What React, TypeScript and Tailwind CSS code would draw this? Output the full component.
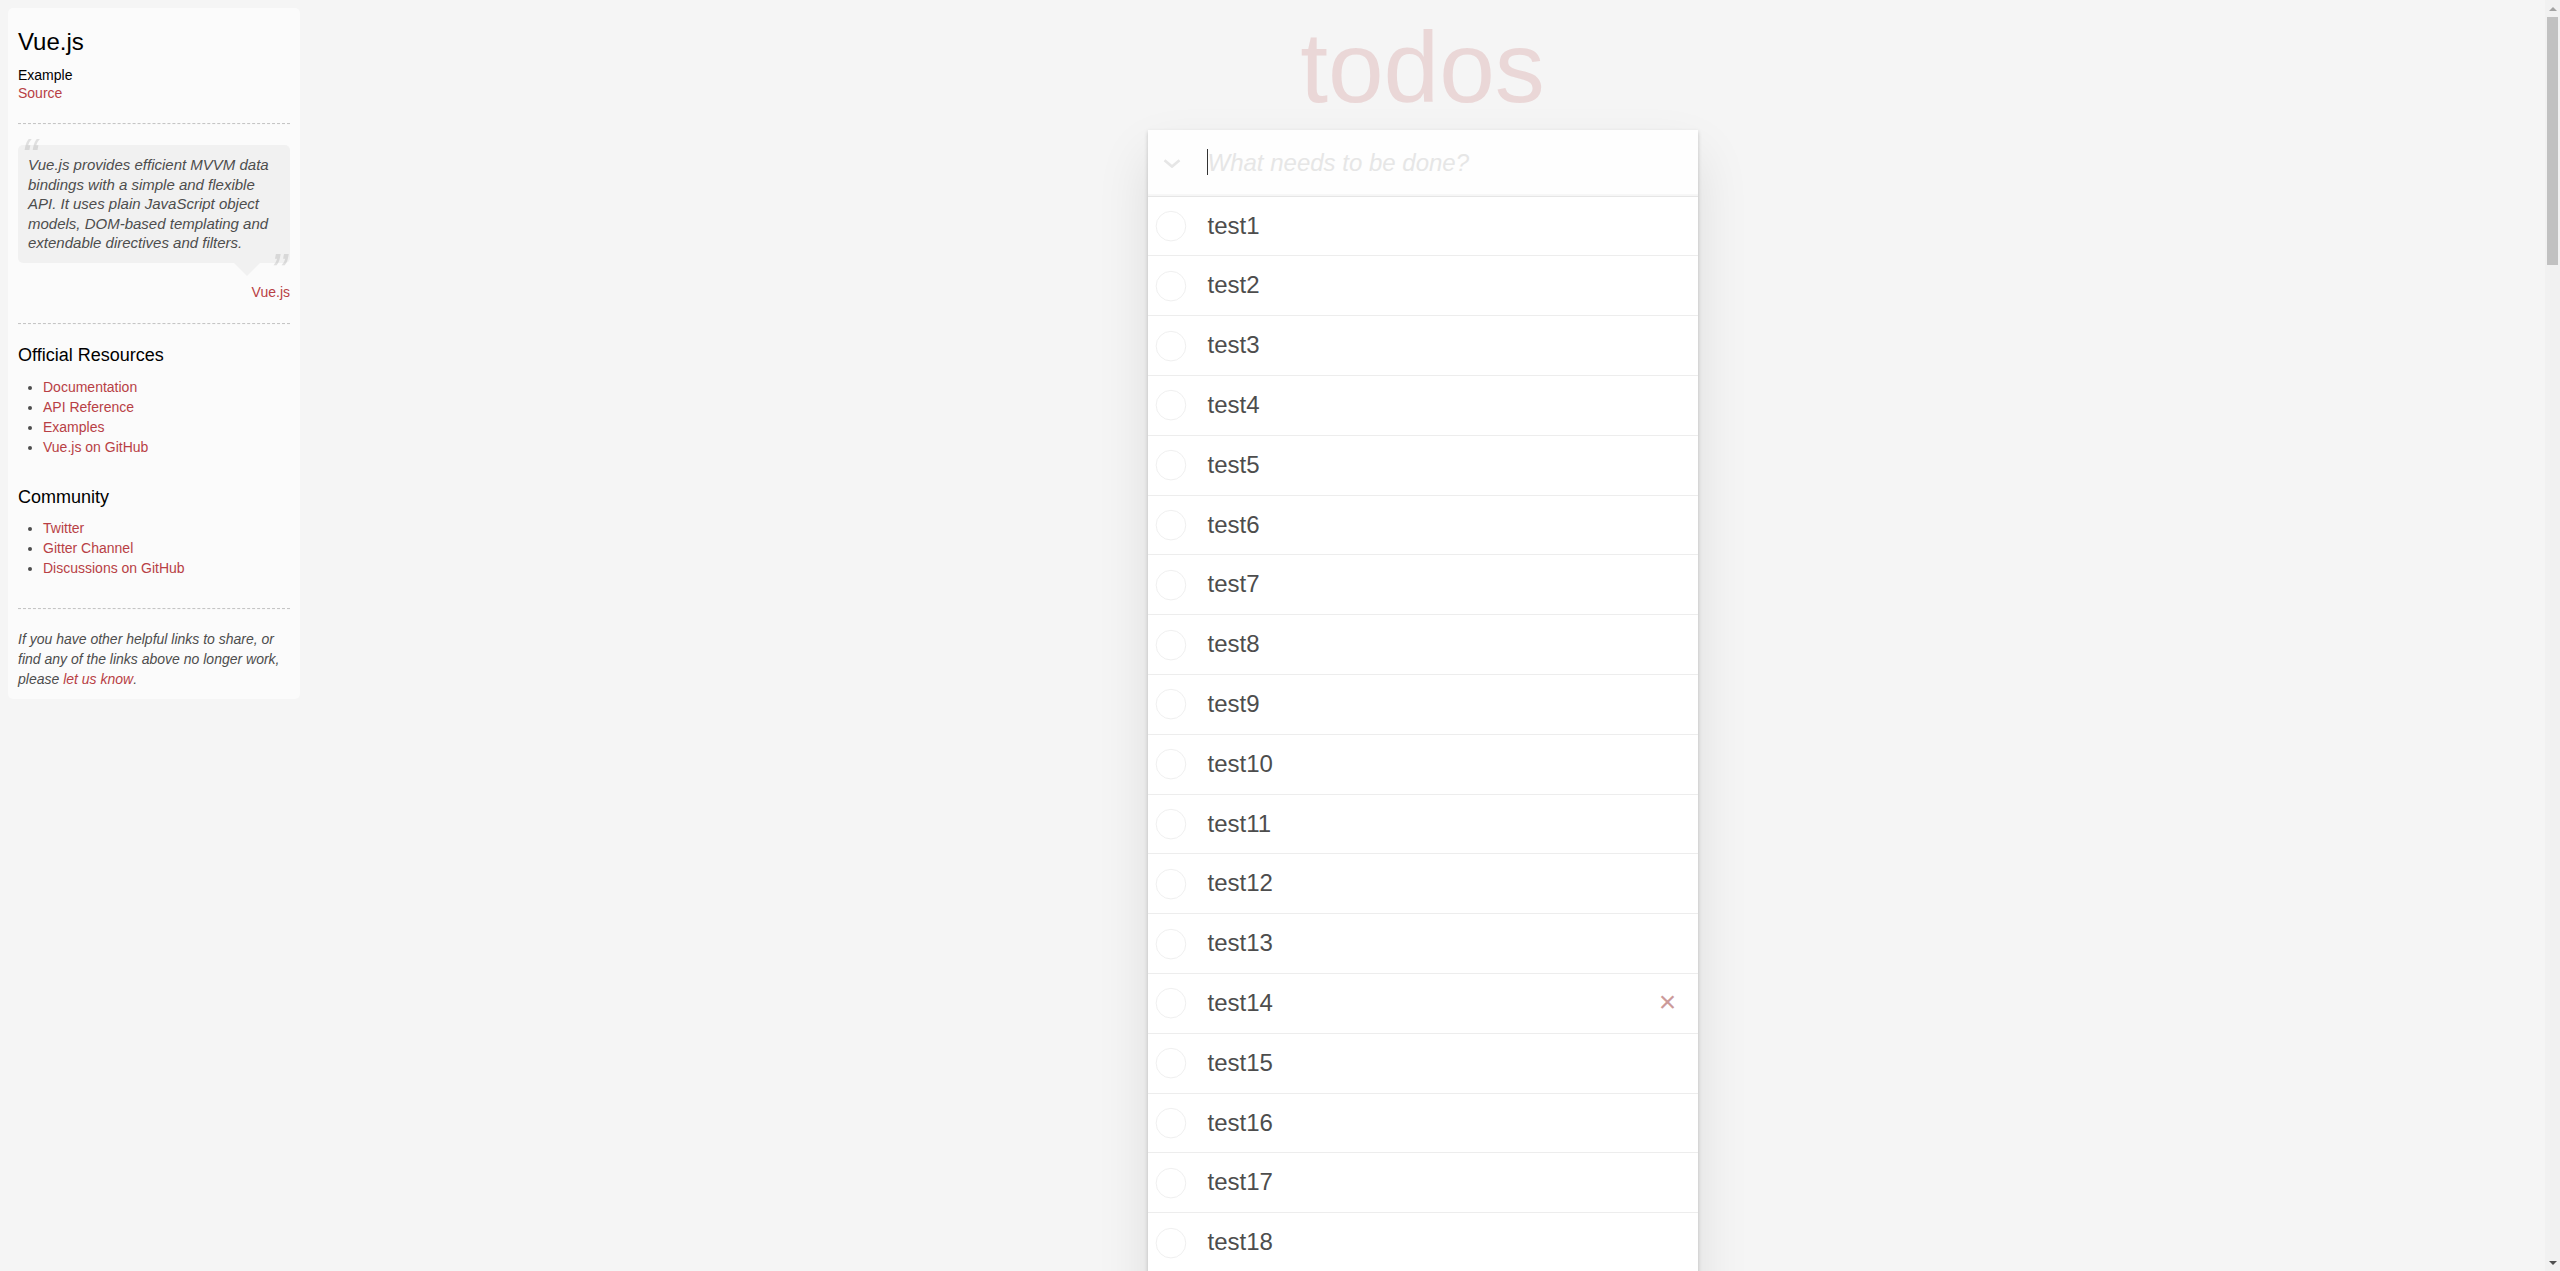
import React from "react";

const todos = Array.from({ length: 100 }, (_, i) => `test${i + 1}`);

function Circle() {
  return (
    <svg className="h-[40px] w-[40px] shrink-0" viewBox="-10 -18 100 135" aria-hidden>
      <circle cx="50" cy="50" r="50" fill="none" stroke="#ededed" strokeWidth="3" />
    </svg>
  );
}

function Hr() {
  return <hr className="my-5 h-0 border-x-0 border-y border-dashed border-t-[#c5c5c5] border-b-[#f7f7f7]" />;
}

function Link({ children }: { children: React.ReactNode }) {
  return (
    <a href="#" className="font-normal text-[#b83f45] no-underline">
      {children}
    </a>
  );
}

function Sidebar() {
  return (
    <aside className="ml-2 mt-2 w-[292px] shrink-0 rounded-[5px] bg-white/60 p-[10px]">
      <header>
        <h3 className="my-[10px] text-[24px] font-medium leading-[1.2] text-black">Vue.js</h3>
        <h5 className="mb-0 mt-[10px] text-[14px] font-medium leading-[1.2] text-black">Example</h5>
        <div>
          <Link>Source</Link>
        </div>
      </header>
      <Hr />
      <blockquote className="relative mt-5 rounded-[5px] bg-black/[0.04] p-[10px]">
        <span className="pointer-events-none absolute left-[3px] top-[-20px] text-[50px] italic leading-[1.3] opacity-15">
          &ldquo;
        </span>
        <p className="text-[15px] font-light italic leading-[1.3]">
          Vue.js provides efficient MVVM data bindings with a simple and flexible API. It uses plain JavaScript object
          models, DOM-based templating and extendable directives and filters.
        </p>
        <span className="pointer-events-none absolute bottom-[-42px] right-[3px] text-[50px] italic leading-[1.3] opacity-15">
          &rdquo;
        </span>
        <span className="absolute right-[30px] top-full h-0 w-0 border-[13px] border-transparent border-t-[rgba(0,0,0,0.04)]" />
      </blockquote>
      <div className="mt-5 text-right">
        <Link>Vue.js</Link>
      </div>
      <div className="pt-[1px]">
        <Hr />
      </div>
      <h4 className="my-[10px] text-[18px] font-medium leading-[1.2] text-black">Official Resources</h4>
      <ul className="mb-[30px] ml-[25px] list-disc">
        <li className="leading-[20px]">
          <Link>Documentation</Link>
        </li>
        <li className="leading-[20px]">
          <Link>API Reference</Link>
        </li>
        <li className="leading-[20px]">
          <Link>Examples</Link>
        </li>
        <li className="leading-[20px]">
          <Link>Vue.js on GitHub</Link>
        </li>
      </ul>
      <h4 className="my-[10px] text-[18px] font-medium leading-[1.2] text-black">Community</h4>
      <ul className="mb-[30px] ml-[25px] list-disc">
        <li className="leading-[20px]">
          <Link>Twitter</Link>
        </li>
        <li className="leading-[20px]">
          <Link>Gitter Channel</Link>
        </li>
        <li className="leading-[20px]">
          <Link>Discussions on GitHub</Link>
        </li>
      </ul>
      <footer>
        <Hr />
        <em>
          If you have other helpful links to share, or find any of the links above no longer work, please{" "}
          <Link>let us know</Link>.
        </em>
      </footer>
    </aside>
  );
}

function TodoApp() {
  return (
    <div className="mx-auto w-[550px]">
      <h1 className="h-[130px] pt-[17px] text-center text-[100px] font-thin leading-[100px] text-[rgba(175,47,47,0.15)]">
        todos
      </h1>
      <section className="bg-white shadow-[0_2px_4px_0_rgba(0,0,0,0.2),0_25px_50px_0_rgba(0,0,0,0.1)]">
        <header className="relative flex bg-[rgba(0,0,0,0.003)] shadow-[inset_0_-2px_1px_rgba(0,0,0,0.03)]">
          <label className="flex w-[60px] shrink-0 items-center pl-[15px] pt-[2px]">
            <svg width="18" height="9" viewBox="0 0 18 9" aria-hidden>
              <polyline points="1.5,1.2 9,7.6 16.5,1.2" fill="none" stroke="#e6e6e6" strokeWidth="2.6" />
            </svg>
          </label>
          <input
            className="min-w-0 flex-1 bg-transparent py-4 pr-4 text-[24px] font-light leading-[1.4em] text-[#4d4d4d] caret-transparent outline-none placeholder:font-light placeholder:italic placeholder:text-[#e6e6e6]"
            placeholder="What needs to be done?"
          />
          <span className="pointer-events-none absolute left-[59px] top-[19px] h-[26px] w-px bg-[#333]" />
        </header>
        <div className="relative z-[2] border-t border-[#e6e6e6]">
          <ul>
            {todos.map((t) => (
              <li key={t} className="flex items-center border-b border-[#ededed] text-[24px]">
                <Circle />
                <label className="min-w-0 flex-1 break-all py-[15px] pl-[20px] pr-[15px] font-light leading-[1.2]">
                  {t}
                </label>
                {t === "test14" && (
                  <button className="mr-[10px] mt-[8px] flex h-[40px] w-[40px] items-center justify-center self-start text-[30px] leading-[34px] text-[#cc9a9a]">
                    ×
                  </button>
                )}
              </li>
            ))}
          </ul>
        </div>
        <footer className="flex h-[41px] items-center justify-between border-t border-[#e6e6e6] px-[15px] text-[#777]">
          <span>
            <strong>100</strong> items left
          </span>
          <ul className="flex gap-1">
            <li>
              <a className="rounded-[3px] border border-[rgba(175,47,47,0.2)] px-[7px] py-[3px]">All</a>
            </li>
            <li>
              <a className="px-[7px] py-[3px]">Active</a>
            </li>
            <li>
              <a className="px-[7px] py-[3px]">Completed</a>
            </li>
          </ul>
          <span className="w-[90px]" />
        </footer>
      </section>
      <footer className="mt-[65px] text-center text-[10px] leading-none text-[#bfbfbf]">
        <p className="my-[10px]">Double-click to edit a todo</p>
        <p className="my-[10px]">Written by Evan You</p>
        <p className="my-[10px]">Part of TodoMVC</p>
      </footer>
    </div>
  );
}

function Scrollbar() {
  return (
    <div className="flex w-[15px] shrink-0 flex-col bg-[#f1f1f1]">
      <div className="flex h-[17px] items-center justify-center">
        <svg width="8" height="4" viewBox="0 0 8 4" aria-hidden>
          <polygon points="4,0 8,4 0,4" fill="#a3a3a3" />
        </svg>
      </div>
      <div className="flex-1 px-[2px]">
        <div className="h-[248px] bg-[#c1c1c1]" />
      </div>
      <div className="flex h-[17px] items-center justify-center">
        <svg width="8" height="4" viewBox="0 0 8 4" aria-hidden>
          <polygon points="0,0 8,0 4,4" fill="#505050" />
        </svg>
      </div>
    </div>
  );
}

export default function App() {
  return (
    <div className="flex h-[1271px] w-full overflow-hidden bg-[#f5f5f5] font-['Liberation_Sans',Arial,sans-serif] text-[14px] font-light leading-[1.4em] text-[#4d4d4d]">
      <div className="flex min-w-0 flex-1 items-start overflow-hidden">
        <Sidebar />
        <div className="min-w-0 flex-1">
          <TodoApp />
        </div>
      </div>
      <Scrollbar />
    </div>
  );
}
